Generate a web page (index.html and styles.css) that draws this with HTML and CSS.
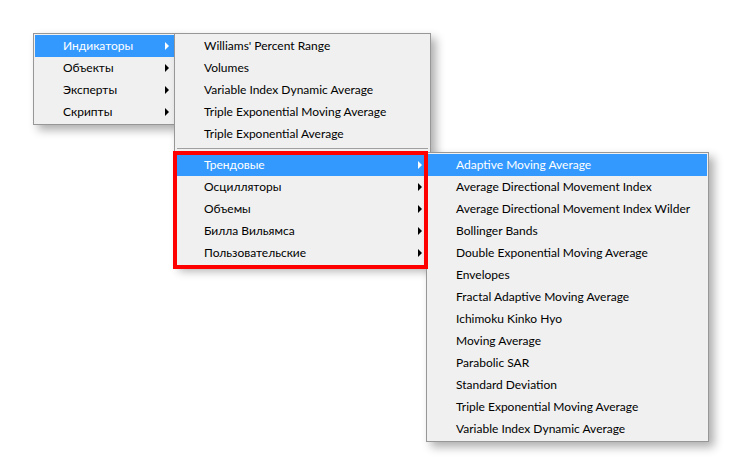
FILE: index.html
```html
<!DOCTYPE html>
<html lang="ru">

<head>
    <meta charset="UTF-8">
    <title>Меню индикаторов</title>
    <link rel="stylesheet" href="styles.css">
</head>

<body>
    <div class="desk">
        <!-- main menu -->
        <div class="menu menu-main">
            <div class="item active">Индикаторы<span class="arrow"></span></div>
            <div class="item">Объекты<span class="arrow"></span></div>
            <div class="item">Эксперты<span class="arrow"></span></div>
            <div class="item">Скрипты<span class="arrow"></span></div>
        </div>

        <!-- indicators -->
        <div class="menu menu-ind">
            <div class="item">Williams' Percent Range</div>
            <div class="item">Volumes</div>
            <div class="item">Variable Index Dynamic Average</div>
            <div class="item">Triple Exponential Moving Average</div>
            <div class="item">Triple Exponential Average</div>
            <div class="sep"></div>
            <div class="item active">Трендовые<span class="arrow"></span></div>
            <div class="item">Осцилляторы<span class="arrow"></span></div>
            <div class="item">Объемы<span class="arrow"></span></div>
            <div class="item">Билла Вильямса<span class="arrow"></span></div>
            <div class="item">Пользовательские<span class="arrow"></span></div>
        </div>

        <!-- trend -->
        <div class="menu menu-trend">
            <div class="item active">Adaptive Moving Average</div>
            <div class="item">Average Directional Movement Index</div>
            <div class="item">Average Directional Movement Index Wilder</div>
            <div class="item">Bollinger Bands</div>
            <div class="item">Double Exponential Moving Average</div>
            <div class="item">Envelopes</div>
            <div class="item">Fractal Adaptive Moving Average</div>
            <div class="item">Ichimoku Kinko Hyo</div>
            <div class="item">Moving Average</div>
            <div class="item">Parabolic SAR</div>
            <div class="item">Standard Deviation</div>
            <div class="item">Triple Exponential Moving Average</div>
            <div class="item">Variable Index Dynamic Average</div>
        </div>

        <div class="mark"></div>
    </div>
</body>

</html>
```

FILE: styles.css
```css
body {
    margin: 0;
    background: #fff;
    font-family: "Lato", "Noto Sans", sans-serif;
    font-size: 12px;
    color: #000;
}

.desk {
    position: relative;
    width: 741px;
    height: 475px;
    overflow: hidden;
}

.menu {
    position: absolute;
    box-sizing: border-box;
    background: #f0f0f0;
    border: 1px solid #979797;
    padding: 1px;
    box-shadow: 5px 5px 9px rgba(0, 0, 0, 0.32);
}

.menu-main {
    left: 33px;
    top: 33px;
    width: 143px;
}

.menu-ind {
    left: 174px;
    top: 33px;
    width: 257px;
}

.menu-trend {
    left: 426px;
    top: 152px;
    width: 283px;
}

.item {
    position: relative;
    height: 22px;
    line-height: 22px;
    padding-left: 28px;
    white-space: nowrap;
}

.item.active {
    background: #3399ff;
    color: #fff;
}

.arrow {
    position: absolute;
    right: 7px;
    top: 7px;
    width: 0;
    height: 0;
    border-left: 4px solid #000;
    border-top: 4px solid transparent;
    border-bottom: 4px solid transparent;
}

.menu-main .arrow {
    right: 5px;
}

.active .arrow {
    border-left-color: #fff;
}

.sep {
    height: 9px;
    margin: 0 1px;
    box-sizing: border-box;
    border-top: 3px solid transparent;
}

.sep::before {
    content: "";
    display: block;
    height: 1px;
    background: #a0a0a0;
}

.mark {
    position: absolute;
    left: 173px;
    top: 151px;
    width: 255px;
    height: 118px;
    box-sizing: border-box;
    border: 4px solid #ff0000;
}
```
